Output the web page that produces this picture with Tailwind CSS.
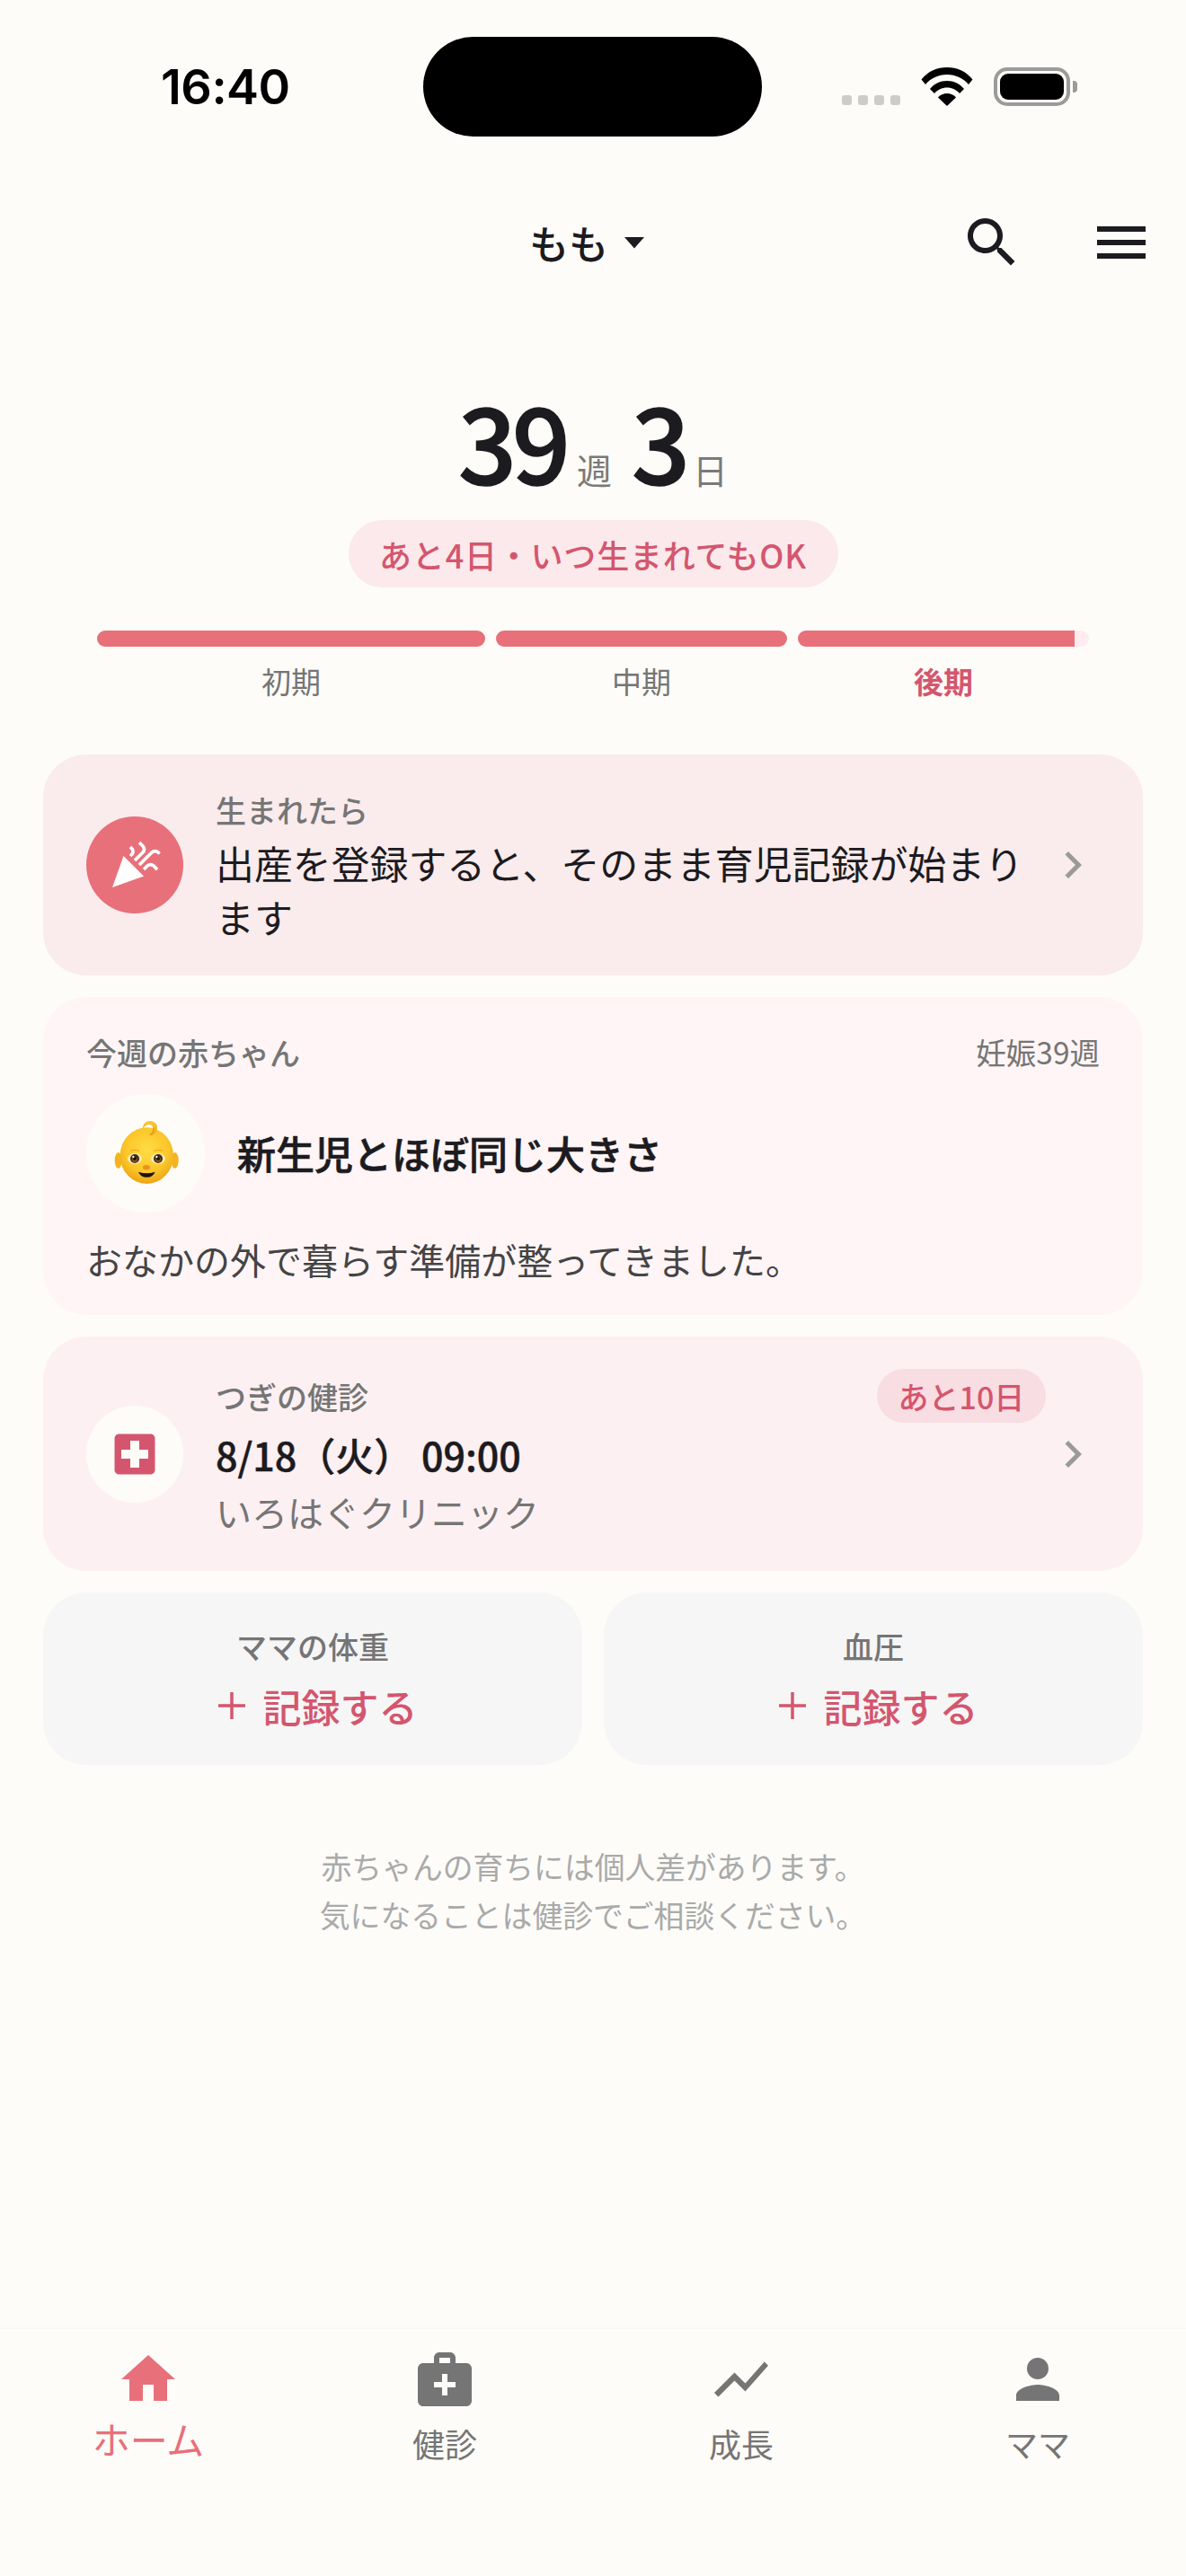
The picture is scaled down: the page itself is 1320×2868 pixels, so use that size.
<!DOCTYPE html>
<html lang="ja">
<head>
<meta charset="utf-8">
<script src="https://cdn.jsdelivr.net/npm/@tailwindcss/browser@4"></script>
</head>
<body class="m-0">
<div class="w-[1320px] h-[2868px] bg-[#fdfcf8] flex flex-col overflow-hidden text-[#1c1b1f] font-['Noto_Sans_CJK_JP','Noto_Sans',sans-serif]">

  <!-- status bar -->
  <div class="h-[152px] pt-[41px] pl-[179px] flex items-start shrink-0">
    <div class="w-[292px] h-[111px] flex items-center font-['Inter',sans-serif] font-semibold text-[54px] tracking-[-0.5px] text-black leading-none">16:40</div>
    <div class="w-[377px] h-[111px] rounded-full bg-black"></div>
    <div class="ml-[89px] mt-[34px] flex items-end h-[43px]">
      <div class="flex gap-[7px] mb-[1px]">
        <div class="w-[11px] h-[11px] rounded-[3px] bg-[#cccccb]"></div>
        <div class="w-[11px] h-[11px] rounded-[3px] bg-[#cccccb]"></div>
        <div class="w-[11px] h-[11px] rounded-[3px] bg-[#cccccb]"></div>
        <div class="w-[11px] h-[11px] rounded-[3px] bg-[#cccccb]"></div>
      </div>
      <svg class="ml-[23px]" width="58" height="43" viewBox="0 0 58 43"><path fill="#000" d="M29 0C18 0 8 4 0.500 13.500L5 19C11 12 19.500 8 29 8s18 4 24 11l4.500-5.500C50 4 40 0 29 0z"/><path fill="#000" d="M29 15c-7.500 0-14 3-19 9l5 5c3.500-4 8.500-6.500 14-6.500s10.500 2.500 14 6.500l5-5c-5-6-11.500-9-19-9z"/><path fill="#000" d="M29 29c-4 0-7.500 1.500-10 4.500L29 43l10-9.500C36.500 30.500 33 29 29 29z"/></svg>
      <div class="ml-[23px] flex items-center">
        <div class="w-[85px] h-[43px] rounded-[15px] border-[4px] border-[#9b9b9a] p-[3px]">
          <div class="w-full h-full rounded-[9px] bg-black"></div>
        </div>
        <div class="ml-[3px] w-[5px] h-[13px] rounded-r-[4px] bg-[#9b9b9a]"></div>
      </div>
    </div>
  </div>

  <!-- app bar -->
  <div class="mt-[82px] h-[72px] pr-[36px] flex items-center shrink-0">
    <div class="ml-[589px] flex items-center">
      <span class="text-[44px] leading-[60px] font-medium">もも</span>
      <svg class="ml-[17px]" width="24" height="13" viewBox="0 0 24 13"><path fill="#1c1b1f" d="M1 0h22L12 12.500z"/></svg>
    </div>
    <div class="ml-auto flex gap-[72px]">
      <svg width="72" height="72" viewBox="0 0 24 24"><path fill="#1c1b1f" d="M15.500 14h-.79l-.28-.27C15.410 12.590 16 11.110 16 9.500 16 5.910 13.090 3 9.500 3S3 5.910 3 9.500 5.910 16 9.500 16c1.610 0 3.090-.59 4.230-1.570l.27.28v.79l5 4.990L20.490 19l-4.990-5zm-6 0C7.010 14 5 11.990 5 9.500S7.010 5 9.500 5 14 7.010 14 9.500 11.990 14 9.500 14z"/></svg>
      <svg width="72" height="72" viewBox="0 0 24 24"><path fill="#1c1b1f" d="M3 18h18v-2H3v2zm0-5h18v-2H3v2zm0-7v2h18V6H3z"/></svg>
    </div>
  </div>

  <!-- week counter -->
  <div class="mt-[112px] h-[144px] flex justify-center items-baseline shrink-0">
    <span class="text-[114px] leading-[144px] font-medium [-webkit-text-stroke:1.5px_#1c1b1f] tracking-[-5px]">39</span>
    <span class="ml-[12px] text-[39px] text-[#7a7a7a]">週</span>
    <span class="ml-[22px] text-[114px] leading-[144px] font-medium [-webkit-text-stroke:1.5px_#1c1b1f]">3</span>
    <span class="ml-[3px] text-[39px] text-[#7a7a7a]">日</span>
  </div>

  <!-- pill -->
  <div class="mt-[17px] flex justify-center shrink-0">
    <div class="h-[75px] w-[545px] rounded-full bg-[#fbe9eb] flex items-center justify-center text-[#d4566e] text-[36px] tracking-[0.8px] font-medium">あと4日・いつ生まれてもOK</div>
  </div>

  <!-- progress -->
  <div class="mt-[48px] mx-[108px] flex gap-[12px] shrink-0">
    <div class="flex-[4] flex flex-col items-center gap-[14px]">
      <div class="w-full h-[18px] rounded-full bg-[#e8707b]"></div>
      <div class="text-[33px] leading-[48px] text-[#757575]">初期</div>
    </div>
    <div class="flex-[3] flex flex-col items-center gap-[14px]">
      <div class="w-full h-[18px] rounded-full bg-[#e8707b]"></div>
      <div class="text-[33px] leading-[48px] text-[#757575]">中期</div>
    </div>
    <div class="flex-[3] flex flex-col items-center gap-[14px]">
      <div class="w-full h-[18px] rounded-full bg-[#ffebf0] overflow-hidden"><div class="w-[95%] h-full bg-[#e8707b]"></div></div>
      <div class="text-[33px] leading-[48px] text-[#d4566e] font-semibold">後期</div>
    </div>
  </div>

  <!-- cards -->
  <div class="mt-[58px] mx-[48px] flex flex-col gap-[24px] shrink-0">

    <div class="h-[246px] rounded-[48px] bg-[#faebec] pl-[48px] pr-[48px] flex items-center">
      <div class="w-[108px] h-[108px] rounded-full bg-[#e8707b] flex items-center justify-center shrink-0">
        <svg width="60" height="60" viewBox="0 0 24 24"><path fill="#fff" d="M2 22l14-5-9-9zM14.530 12.530l5.590-5.590c.49-.49 1.280-.49 1.770 0l.59.59 1.060-1.060-.59-.59c-1.070-1.070-2.820-1.070-3.890 0l-5.590 5.590 1.060 1.060zM10.060 6.880l-.59.59 1.060 1.060.59-.59c1.070-1.070 1.070-2.820 0-3.890l-.59-.59-1.060 1.060.59.59c.48.48.48 1.280 0 1.770zM17.060 11.880l-1.590 1.590 1.060 1.060 1.590-1.590c.49-.49 1.280-.49 1.770 0l1.610 1.610 1.060-1.060-1.610-1.610c-1.080-1.070-2.820-1.070-3.890 0zM15.060 5.880l-3.590 3.590 1.060 1.060 3.590-3.590c1.070-1.070 1.070-2.820 0-3.890l-1.590-1.590-1.060 1.060 1.590 1.590c.48.490.48 1.290 0 1.770z"/></svg>
      </div>
      <div class="ml-[36px] flex-1 min-w-0 pt-[2px]">
        <div class="text-[34px] leading-[48px] text-[#757575] font-medium">生まれたら</div>
        <div class="mt-[4px] text-[42.9px] leading-[60px] text-[#1c1b1f]">出産を登録すると、そのまま育児記録が始まります</div>
      </div>
      <svg class="shrink-0" width="60" height="60" viewBox="0 0 24 24"><path fill="#9a9a9a" d="M10 6L8.590 7.410 13.170 12l-4.580 4.590L10 18l6-6z"/></svg>
    </div>

    <div class="h-[354px] rounded-[48px] bg-[#fff5f6] px-[48px] pt-[34px] flex flex-col">
      <div class="flex justify-between items-center h-[54px]">
        <span class="text-[34px] text-[#757575] font-medium">今週の赤ちゃん</span>
        <span class="text-[33.500px] text-[#757575]">妊娠39週</span>
      </div>
      <div class="mt-[20px] flex items-center">
        <div class="w-[132px] h-[132px] rounded-full bg-[#fdfcf8] flex items-center justify-center">
          <svg width="110" height="110" viewBox="-9 -5 330 330">
            <defs>
              <radialGradient id="f" gradientUnits="userSpaceOnUse" cx="160" cy="150" r="118"><stop offset="0%" stop-color="#ffdc45"/><stop offset="62%" stop-color="#fbc62a"/><stop offset="100%" stop-color="#e99f12"/></radialGradient>
              <linearGradient id="c" x1="0" y1="0" x2="0" y2="1"><stop offset="0%" stop-color="#fbc934"/><stop offset="100%" stop-color="#f0a81c"/></linearGradient>
            </defs>
            <ellipse cx="65" cy="184" rx="12" ry="27" fill="#f3b41f"/>
            <ellipse cx="254" cy="184" rx="12" ry="27" fill="#f3b41f"/>
            <ellipse cx="160" cy="168" rx="89" ry="94" fill="url(#f)"/>
            <path d="M147 76c-1-14 12-25 26-24 15 1 24 14 22 27-2 12-12 21-20 22-6 0-8-5-3-8 8-5 11-14 8-21-3-8-14-10-22-5-4 3-7 7-11 9z" fill="url(#c)"/>
            <path d="M172 98c8-5 13-15 10-23" fill="none" stroke="#d98f0e" stroke-width="3"/>
            <path d="M105 152q15-6 30 0" fill="none" stroke="#efa81f" stroke-width="4"/>
            <path d="M184 152q15-6 30 0" fill="none" stroke="#efa81f" stroke-width="4"/>
            <ellipse cx="120" cy="178" rx="24" ry="18" fill="#fbeab0"/>
            <ellipse cx="198" cy="178" rx="24" ry="18" fill="#fbeab0"/>
            <circle cx="120" cy="178" r="15" fill="#3f2a14"/>
            <circle cx="198" cy="178" r="15" fill="#3f2a14"/>
            <circle cx="120" cy="181" r="9" fill="#8a5a1c"/>
            <circle cx="198" cy="181" r="9" fill="#8a5a1c"/>
            <circle cx="120" cy="178" r="6" fill="#1d1208"/>
            <circle cx="198" cy="178" r="6" fill="#1d1208"/>
            <circle cx="115" cy="172" r="3.500" fill="#fff"/>
            <circle cx="193" cy="172" r="3.500" fill="#fff"/>
            <ellipse cx="159" cy="207" rx="12" ry="8" fill="#e6941c"/>
            <path d="M132 222q28 9 56 0q-7 18-28 18t-28-18z" fill="#1c130a"/>
          </svg>
        </div>
        <div class="ml-[36px] text-[43px] leading-[60px] font-medium [-webkit-text-stroke:0.7px_#1c1b1f] -mt-[2px]">新生児とほぼ同じ大きさ</div>
      </div>
      <div class="mt-[22px] text-[40px] leading-[60px] text-[#444]">おなかの外で暮らす準備が整ってきました。</div>
    </div>

    <div class="h-[261px] rounded-[48px] bg-[#fdf0f2] pl-[48px] pr-[48px] flex items-center relative">
      <div class="w-[108px] h-[108px] rounded-full bg-[#fdfcf8] flex items-center justify-center shrink-0">
        <svg width="60" height="60" viewBox="0 0 24 24"><path fill="#d4566e" d="M19 3H5c-1.100 0-1.990.9-1.990 2L3 19c0 1.100.9 2 2 2h14c1.100 0 2-.9 2-2V5c0-1.100-.9-2-2-2zm-1 11h-4v4h-4v-4H6v-4h4V6h4v4h4v4z"/></svg>
      </div>
      <div class="ml-[36px] flex-1 min-w-0 pt-[7px]">
        <div class="text-[34px] leading-[48px] text-[#757575] font-medium">つぎの健診</div>
        <div class="mt-[10px] text-[43px] leading-[60px] font-medium [-webkit-text-stroke:0.5px_#1c1b1f]">8/18（火） 09:00</div>
        <div class="mt-[4px] text-[40px] leading-[60px] text-[#757575]">いろはぐクリニック</div>
      </div>
      <svg class="shrink-0" width="60" height="60" viewBox="0 0 24 24"><path fill="#9a9a9a" d="M10 6L8.590 7.410 13.170 12l-4.580 4.590L10 18l6-6z"/></svg>
      <div class="absolute top-[36px] left-[928px] w-[188px] h-[60px] rounded-full bg-[#f8dde2] flex items-center justify-center text-[34px] font-medium text-[#d4566e]">あと10日</div>
    </div>

    <div class="flex gap-[24px]">
      <div class="flex-1 h-[192px] rounded-[48px] bg-[#f6f6f7] flex flex-col items-center justify-center">
        <div class="text-[34px] leading-[48px] text-[#757575] font-medium">ママの体重</div>
        <div class="mt-[12px] pl-[3px] flex items-center text-[#d4566e]">
          <svg width="46" height="48" viewBox="1 0 46 48"><path fill="none" stroke="#d4566e" stroke-width="3.500" d="M24 9v30M9 24h30"/></svg>
          <span class="ml-[12px] text-[43px] leading-[60px] font-medium">記録する</span>
        </div>
      </div>
      <div class="flex-1 h-[192px] rounded-[48px] bg-[#f6f6f7] flex flex-col items-center justify-center">
        <div class="text-[34px] leading-[48px] text-[#757575] font-medium">血圧</div>
        <div class="mt-[12px] pl-[3px] flex items-center text-[#d4566e]">
          <svg width="46" height="48" viewBox="1 0 46 48"><path fill="none" stroke="#d4566e" stroke-width="3.500" d="M24 9v30M9 24h30"/></svg>
          <span class="ml-[12px] text-[43px] leading-[60px] font-medium">記録する</span>
        </div>
      </div>
    </div>
  </div>

  <!-- note -->
  <div class="mt-[86px] text-center text-[33.8px] leading-[54px] text-[#aaaaaa] shrink-0">
    <div>赤ちゃんの育ちには個人差があります。</div>
    <div>気になることは健診でご相談ください。</div>
  </div>

  <!-- tab bar -->
  <div class="mt-auto h-[276px] border-t border-[#f7f6f2] flex shrink-0 shadow-[0_-6px_12px_rgba(0,0,0,0.006)]">
    <div class="flex-1 flex flex-col items-center pt-[20px]">
      <svg width="72" height="72" viewBox="0 0 24 24"><path fill="#e8707b" d="M10 20v-6h4v6h5v-8h3L12 3 2 12h3v8z"/></svg>
      <span class="text-[42px] leading-[60px] text-[#e8707b]">ホーム</span>
    </div>
    <div class="flex-1 flex flex-col items-center pt-[20px]">
      <svg width="72" height="72" viewBox="0 0 24 24"><path fill="#757575" d="M20 6h-4V4c0-1.100-.9-2-2-2h-4c-1.100 0-2 .9-2 2v2H4c-1.100 0-2 .9-2 2v12c0 1.100.9 2 2 2h16c1.100 0 2-.9 2-2V8c0-1.100-.9-2-2-2zM10 4h4v2h-4V4zm6 11h-3v3h-2v-3H8v-2h3v-3h2v3h3v2z"/></svg>
      <span class="mt-[5px] text-[36px] leading-[60px] text-[#757575]">健診</span>
    </div>
    <div class="flex-1 flex flex-col items-center pt-[20px]">
      <svg width="72" height="72" viewBox="0 0 24 24"><path fill="#757575" d="M3.500 18.490l6-6.010 4 4L22 6.920l-1.410-1.410-7.090 7.970-4-4L2 16.990z"/></svg>
      <span class="mt-[5px] text-[36px] leading-[60px] text-[#757575]">成長</span>
    </div>
    <div class="flex-1 flex flex-col items-center pt-[20px]">
      <svg width="72" height="72" viewBox="0 0 24 24"><path fill="#757575" d="M12 12c2.210 0 4-1.790 4-4s-1.790-4-4-4-4 1.790-4 4 1.790 4 4 4zm0 2c-2.670 0-8 1.340-8 4v2h16v-2c0-2.660-5.330-4-8-4z"/></svg>
      <span class="mt-[5px] text-[36px] leading-[60px] text-[#757575]">ママ</span>
    </div>
  </div>
</div>
</body>
</html>
